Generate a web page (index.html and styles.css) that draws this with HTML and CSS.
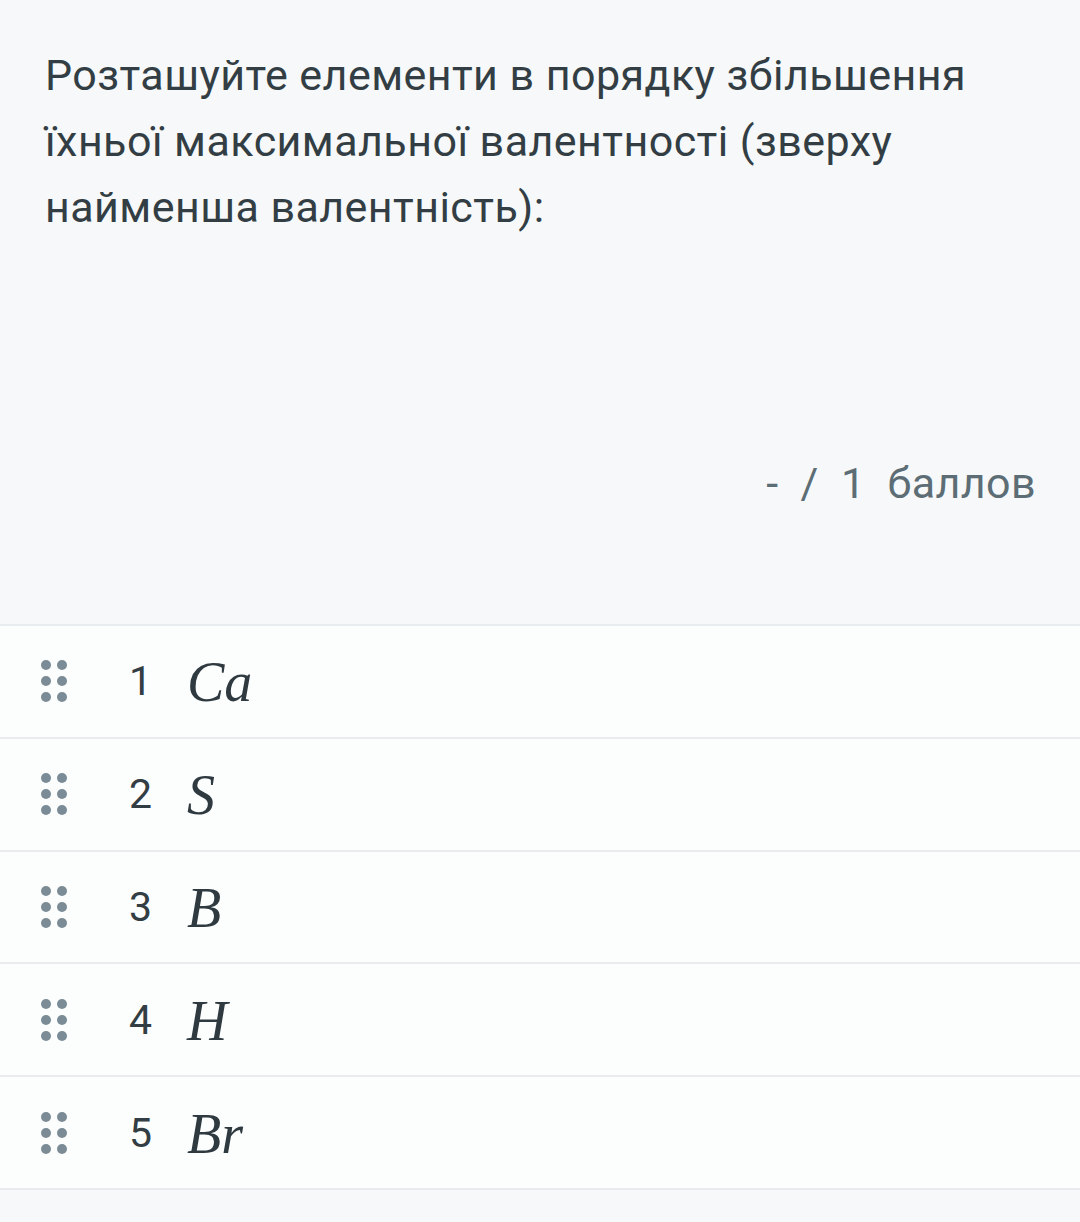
FILE: index.html
```html
<!DOCTYPE html>
<html lang="uk">
<head>
<meta charset="utf-8">
<link rel="stylesheet" href="styles.css">
</head>
<body>
<div class="page">
  <div class="question">
    <p class="prompt">Розташуйте елементи в порядку збільшення їхньої максимальної валентності (зверху найменша валентність):</p>
    <div class="score">-&nbsp; /&nbsp; 1&nbsp; баллов</div>
  </div>
  <ul class="list">
    <li class="row"><span class="grip"><i></i><i></i><i></i><i></i><i></i><i></i></span><span class="num">1</span><span class="math">Ca</span></li>
    <li class="row"><span class="grip"><i></i><i></i><i></i><i></i><i></i><i></i></span><span class="num">2</span><span class="math">S</span></li>
    <li class="row"><span class="grip"><i></i><i></i><i></i><i></i><i></i><i></i></span><span class="num">3</span><span class="math">B</span></li>
    <li class="row"><span class="grip"><i></i><i></i><i></i><i></i><i></i><i></i></span><span class="num">4</span><span class="math">H</span></li>
    <li class="row"><span class="grip"><i></i><i></i><i></i><i></i><i></i><i></i></span><span class="num">5</span><span class="math">Br</span></li>
  </ul>
</div>
</body>
</html>
```
FILE: styles.css
```css
html, body {
  margin: 0;
  padding: 0;
  background: #f6f8f9;
}
.page {
  width: 1080px;
  font-family: Roboto, "Noto Sans", sans-serif;
  color: #333e44;
}
.question {
  padding: 42px 40px 0 45px;
  height: 580px;
  box-sizing: border-box;
}
.prompt {
  margin: 0;
  font-size: 43px;
  line-height: 66px;
  letter-spacing: 0.45px;
}
.score {
  margin-top: 218px;
  padding-right: 4px;
  text-align: right;
  font-size: 43px;
  line-height: 50px;
  color: #5d6d75;
  letter-spacing: 0.4px;
}
.list {
  list-style: none;
  margin: 44px 0 0 0;
  padding: 0;
  border-top: 2px solid #e8ecee;
}
.row {
  display: flex;
  align-items: center;
  height: 110.8px;
  background: #fcfdfd;
  border-bottom: 2px solid #e8ecee;
}
.grip {
  display: grid;
  grid-template-columns: 10px 10px;
  gap: 6px 6px;
  margin-left: 41px;
  width: 26px;
}
.grip i {
  display: block;
  width: 10px;
  height: 10px;
  border-radius: 50%;
  background: #7b8c96;
}
.num {
  margin-left: 62px;
  font-size: 41px;
  width: 58px;
}
.math {
  font-family: "Liberation Serif", "DejaVu Serif", serif;
  font-style: italic;
  font-size: 56px;
  color: #2f3a40;
  margin-top: 2px;
}
```
